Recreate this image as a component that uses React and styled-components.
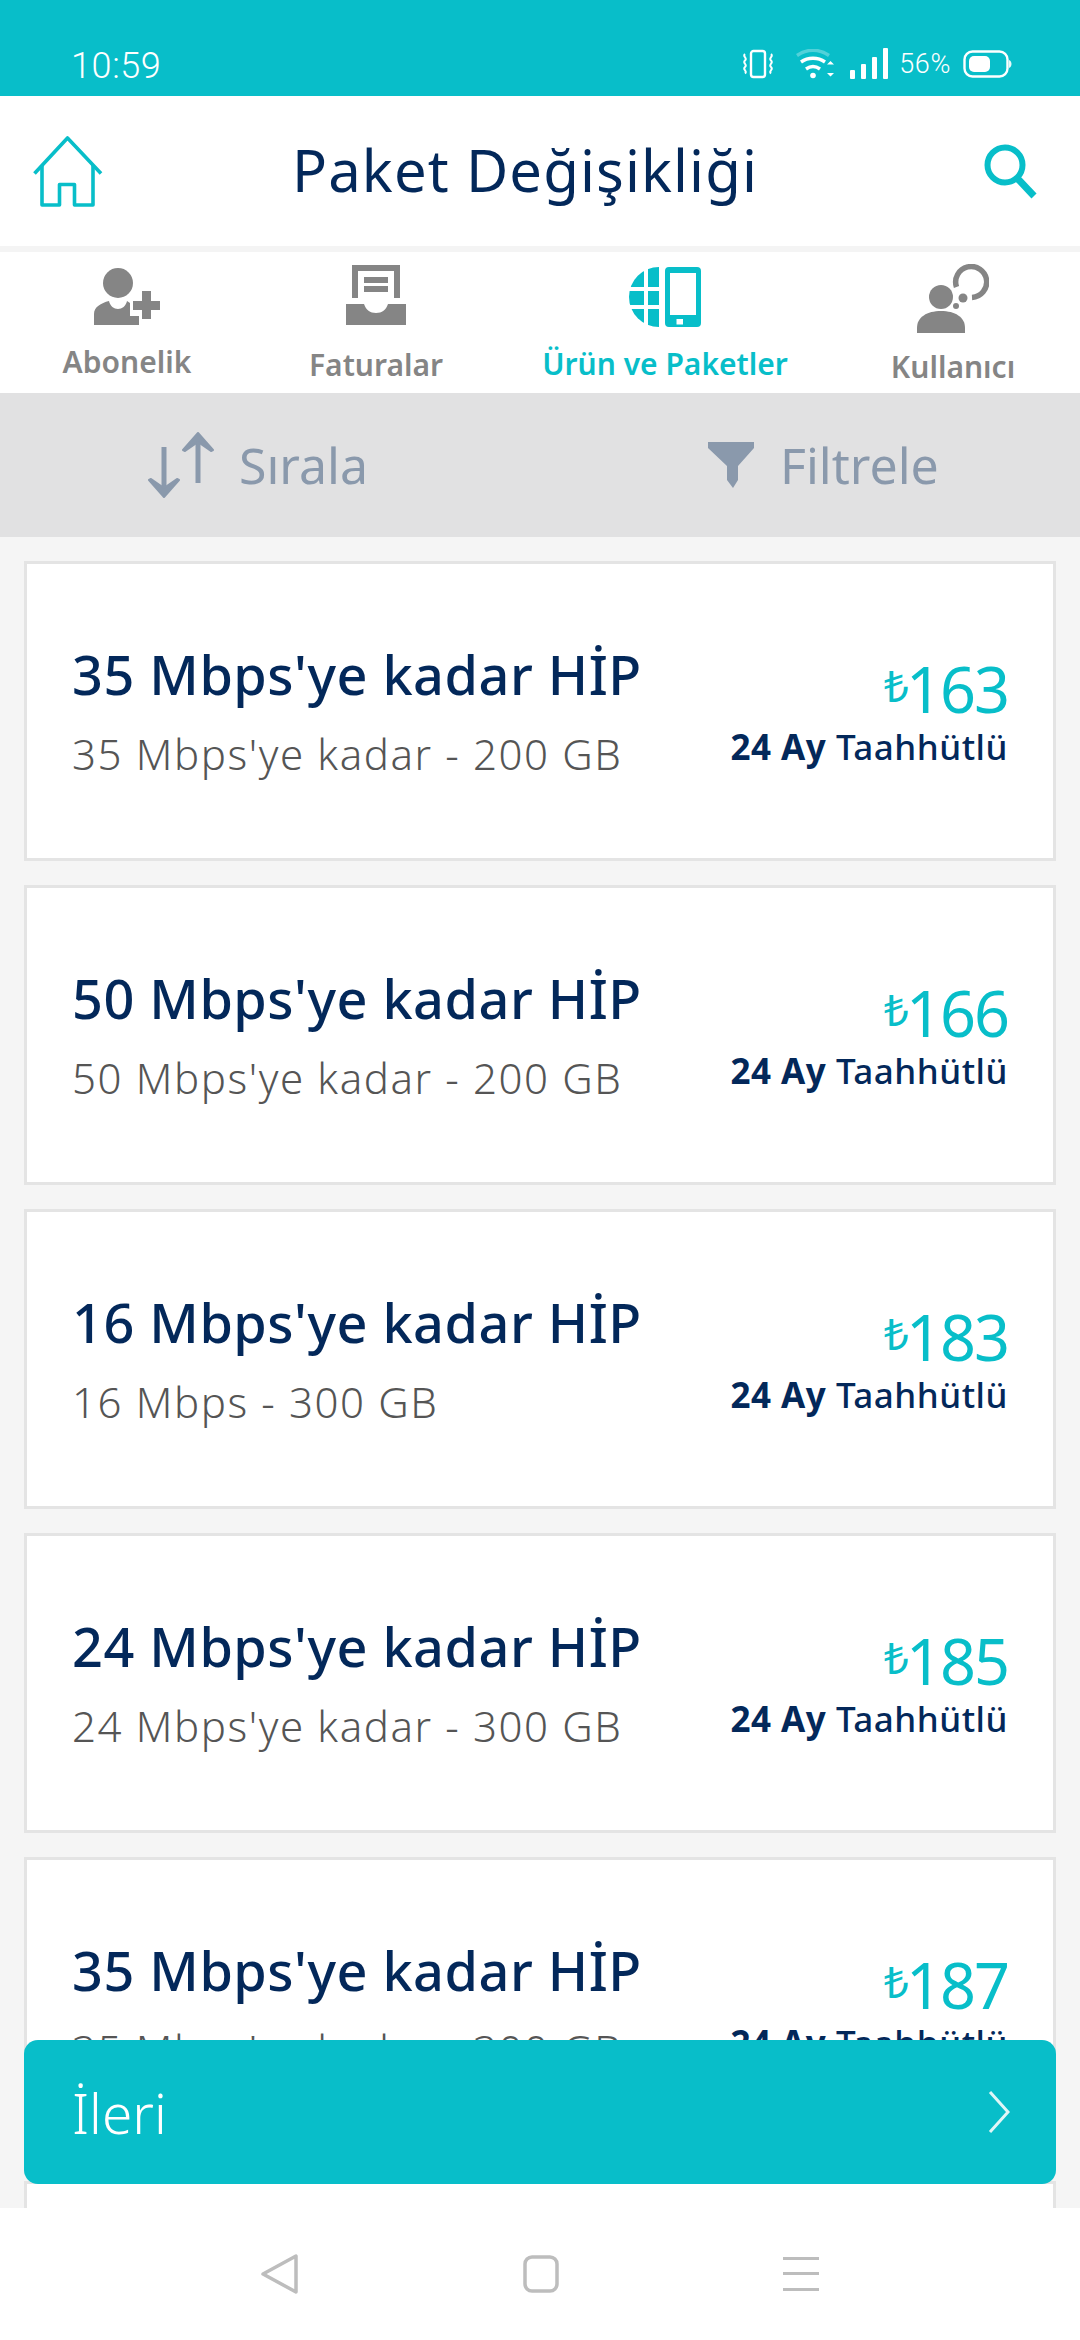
import React from "react";
import styled, { createGlobalStyle } from "styled-components";

const Global = createGlobalStyle`
  html, body { margin: 0; padding: 0; background: #f5f5f5; }
  * { box-sizing: border-box; }
  #root { width: 1080px; height: 2340px; }
`;
const FONT = `"Noto Sans", "Open Sans", "Liberation Sans", sans-serif`;
const TEAL = "#08bec9";
const NAVY = "#03285a";

const Page = styled.div`
  width: 1080px; height: 2340px; display: flex; flex-direction: column;
  position: relative; overflow: hidden; background: #f5f5f5; font-family: ${FONT};
`;
const StatusBar = styled.div`
  height: 96px; flex: none; background: ${TEAL}; display: flex; align-items: flex-end;
  justify-content: space-between; padding: 0 68px 12px 71px; color: #fff;
`;
const Time = styled.span`
  font-family: Roboto, sans-serif; font-weight: 300; font-size: 36px; line-height: 36px; letter-spacing: 0.6px;
`;
const StatusIcons = styled.div`display: flex; align-items: center; height: 36px; margin-bottom: 2px;`;
const Percent = styled.span`
  font-family: Roboto, sans-serif; font-size: 27px; font-weight: 300; line-height: 32px; margin: 0 12px 0 11px; letter-spacing: 0.6px;
`;
const Header = styled.header`
  height: 150px; flex: none; background: #fff; display: flex; align-items: center;
  justify-content: space-between; padding: 0 42px 0 33px;
`;
const Title = styled.h1`
  margin: 0 37px 3px 0; font-size: 58px; font-weight: 400; color: ${NAVY}; letter-spacing: 1.1px; line-height: 70px;
`;
const Divider = styled.div`height: 6px; flex: none; background: #f4f4f4;`;
const Tabs = styled.nav`
  height: 141px; flex: none; background: #fff; display: grid;
  grid-template-columns: 254px 244px 334px 242px;
`;
const Tab = styled.div`
  display: flex; flex-direction: column; align-items: center; padding-top: ${p => p.$top}px;
`;
const TabLabel = styled.span`
  margin-top: ${p => p.$gap}px; font-size: 30px; line-height: 36px; font-weight: 600; white-space: nowrap;
  color: ${p => (p.$active ? TEAL : "#858585")};
`;
const Toolbar = styled.div`
  height: 144px; flex: none; background: #e1e1e2; display: flex;
`;
const ToolGroup = styled.div`
  display: flex; align-items: center; width: 540px; padding-left: ${p => p.$left}px; color: #8a99ac;
`;
const ToolLabel = styled.span`
  font-size: 50px; line-height: 60px; margin-left: ${p => p.$gap}px;
`;
const List = styled.div`
  flex: 1; min-height: 0; overflow: hidden; padding: 24px 24px 0;
  display: flex; flex-direction: column; gap: 24px;
`;
const Card = styled.article`
  flex: none; height: 300px; background: #fff; border: 3px solid #e4e4e4;
  display: flex; justify-content: space-between; align-items: flex-start; padding: 0 45px;
`;
const CardMain = styled.div`padding-top: 75px; display: flex; flex-direction: column;`;
const CardTitle = styled.div`
  font-size: 54px; font-weight: 500; color: ${NAVY}; line-height: 70px; white-space: nowrap; letter-spacing: 0.5px;
`;
const CardSub = styled.div`
  font-size: 42px; font-weight: 300; color: #555; line-height: 56px; margin-top: 17px; white-space: nowrap; letter-spacing: 1.6px;
`;
const CardSide = styled.div`
  padding-top: 87px; display: flex; flex-direction: column; align-items: flex-end;
`;
const Price = styled.div`
  font-size: 63px; color: ${TEAL}; line-height: 76px; white-space: nowrap; letter-spacing: -2px;
`;
const Lira = styled.span`font-size: 44px; position: relative; top: -11px; margin-right: -1px;`;
const Commit = styled.div`
  font-size: 35px; color: ${NAVY}; line-height: 44px; font-weight: 500; white-space: nowrap; margin-top: -9px; letter-spacing: 0.5px;
  b { font-weight: 700; }
`;
const NextButton = styled.button`
  position: absolute; left: 24px; right: 24px; top: 2040px; height: 144px; border: 0; border-radius: 14px;
  background: ${TEAL}; color: #fff; display: flex; align-items: center; justify-content: space-between;
  padding: 0 46px 0 48px; font-family: ${FONT}; font-size: 55px; font-weight: 300;
`;
const NavBar = styled.div`
  height: 132px; flex: none; background: #fff; display: flex; align-items: center; justify-content: center; gap: 224px;
`;
const StatusGap = styled.span`width: ${p => p.$w}px;`;

const Gray = "#858585";
const Slate = "#8a99ac";

const Vibrate = () => (
  <svg width="32" height="30" viewBox="0 0 32 30" fill="none" stroke="#fff" strokeWidth="2.4">
    <rect x="9" y="2" width="14" height="26" rx="2.5" />
    <path d="M3 5c-3 2.500 3 4 0 6.500s3 4 0 6.500 3 4 0 6.500M29 5c3 2.500-3 4 0 6.500s-3 4 0 6.500-3 4 0 6.500" strokeWidth="2" />
  </svg>
);
const Wifi = () => (
  <svg width="40" height="30" viewBox="0 0 40 30" fill="none" stroke="#fff" strokeWidth="3.4">
    <path d="M1 6.500c10-7 22-7 32 0" opacity="0.3" />
    <path d="M5 13c7-5 17-5 24 0" />
    <path d="M10 20c4.500-3.200 9.500-3.200 14 0" />
    <circle cx="17" cy="26.500" r="2.800" fill="#fff" stroke="none" />
    <path d="M31 15.500l3.500-3.500 3.500 3.500zM31 24l3.500 3.500 3.500-3.500z" fill="#fff" stroke="none" />
  </svg>
);
const Signal = () => (
  <svg width="38" height="32" viewBox="0 0 38 32" fill="#fff">
    <rect x="0" y="22" width="5" height="9" rx="1" />
    <rect x="11" y="16" width="5" height="15" rx="1" />
    <rect x="22" y="9" width="5" height="22" rx="1" />
    <rect x="33" y="0" width="5" height="31" rx="1" />
  </svg>
);
const Battery = () => (
  <svg width="49" height="30" viewBox="0 0 49 30">
    <rect x="1.500" y="2.500" width="43" height="25" rx="8" fill="none" stroke="#fff" strokeWidth="2.400" />
    <rect x="6" y="7" width="21" height="16" rx="5" fill="#fff" />
    <path d="M46 11c2 1 2.500 2.500 2.500 4s-.5 3-2.500 4z" fill="#fff" opacity="0.9" />
  </svg>
);
const HomeIcon = () => (
  <svg width="70" height="72" viewBox="0 0 70 72" fill="none" stroke={TEAL} strokeWidth="3.600" strokeLinejoin="round">
    <path d="M1.500 38.500L34.500 3l33.500 35.500" />
    <path d="M9 30v40h17.500V49.500h15V70H60V30" />
  </svg>
);
const SearchIcon = () => (
  <svg width="54" height="55" viewBox="0 0 54 55" fill="none" stroke={TEAL}>
    <circle cx="21" cy="21" r="17.500" strokeWidth="6" />
    <path d="M33 34l17 18" strokeWidth="7" />
  </svg>
);
const AboneIcon = () => (
  <svg width="66" height="57" viewBox="0 0 66 57" fill={Gray}>
    <circle cx="24" cy="15" r="15" />
    <path d="M0 57V46C0 39 7 35 15 33C16 38 20 41 24 41C28 41 32 38 33 33L36 35V48H45V57Z" />
    <path d="M48 23h9v10h9v9h-9v9h-9v-9h-9v-9h9z" />
  </svg>
);
const FaturaIcon = () => (
  <svg width="60" height="60" viewBox="0 0 60 60" fill={Gray}>
    <path d="M6 0h48v33h-6V6H12v27H6z" />
    <rect x="18" y="12" width="24" height="6" />
    <rect x="18" y="21" width="24" height="6" />
    <path d="M0 39h18c2 6 6 9 12 9s10-3 12-9h18v21H0z" />
  </svg>
);
const UrunIcon = () => (
  <svg width="72" height="60" viewBox="0 0 72 60" fill={TEAL}>
    <clipPath id="globeCells">
      <rect x="0" y="0" width="15" height="20" />
      <rect x="19" y="0" width="11" height="20" />
      <rect x="0" y="24" width="15" height="14" />
      <rect x="19" y="24" width="11" height="14" />
      <rect x="0" y="42" width="15" height="18" />
      <rect x="19" y="42" width="11" height="18" />
    </clipPath>
    <circle cx="30" cy="30" r="30" clipPath="url(#globeCells)" />
    <path fillRule="evenodd" d="M40 0h28a4 4 0 0 1 4 4v52a4 4 0 0 1-4 4H40a4 4 0 0 1-4-4V4a4 4 0 0 1 4-4zm1 6v42h26V6zm6.500 46v5.500h6.500V52z" />
  </svg>
);
const UserIcon = () => (
  <svg width="72" height="69" viewBox="0 0 72 69" fill={Gray}>
    <circle cx="24" cy="33" r="12" />
    <path d="M0 69v-5c0-11 10-17 24-17s24 6 24 17v5z" />
    <path d="M55 33.500A15.500 15.500 0 1 0 39.500 23" fill="none" stroke={Gray} strokeWidth="5.500" />
    <circle cx="46" cy="34" r="4.500" />
    <circle cx="39" cy="42" r="3" />
  </svg>
);
const SortIcon = () => (
  <svg width="66" height="67" viewBox="0 0 66 67" fill="none" stroke={Slate} strokeLinejoin="round">
    <path d="M16 15v48" strokeWidth="5" />
    <path d="M1 48l15 17 15-17-2-1-13 9-13-9z" strokeWidth="2" fill={Slate} />
    <path d="M50 6v45" strokeWidth="5" />
    <path d="M35 18L50 1l15 17-2 1-13-9-13 9z" strokeWidth="2" fill={Slate} />
  </svg>
);
const FunnelIcon = () => (
  <svg width="46" height="46" viewBox="0 0 46 46" fill={Slate}>
    <path d="M0 0h46v6L30 24v14l-5 8-6-8V24L0 6z" />
  </svg>
);
const ChevronIcon = () => (
  <svg width="22" height="42" viewBox="0 0 22 42" fill="none" stroke="#dff6f7" strokeWidth="3">
    <path d="M2 1l18 20L2 41" />
  </svg>
);
const BackIcon = () => (
  <svg width="38" height="42" viewBox="0 0 38 42" fill="none" stroke="#bdbdbd" strokeWidth="3.500" strokeLinejoin="round">
    <path d="M35 3v36L2 21z" />
  </svg>
);
const HomeSquare = () => (
  <svg width="36" height="38" viewBox="0 0 36 38" fill="none" stroke="#bdbdbd" strokeWidth="3.500">
    <rect x="2" y="2" width="32" height="34" rx="7" />
  </svg>
);
const MenuIcon = () => (
  <svg width="36" height="34" viewBox="0 0 36 34" fill="#bdbdbd">
    <rect y="0" width="36" height="3" />
    <rect y="15" width="36" height="3" />
    <rect y="31" width="36" height="3" />
  </svg>
);

const plans = [
  ["35 Mbps'ye kadar HİP", "35 Mbps'ye kadar - 200 GB", "163"],
  ["50 Mbps'ye kadar HİP", "50 Mbps'ye kadar - 200 GB", "166"],
  ["16 Mbps'ye kadar HİP", "16 Mbps - 300 GB", "183"],
  ["24 Mbps'ye kadar HİP", "24 Mbps'ye kadar - 300 GB", "185"],
  ["35 Mbps'ye kadar HİP", "35 Mbps'ye kadar - 300 GB", "187"],
  ["", "", ""],
];

export default function App() {
  return (
    <Page>
      <Global />
      <StatusBar>
        <Time>10:59</Time>
        <StatusIcons>
          <Vibrate />
          <StatusGap $w={22} />
          <Wifi />
          <StatusGap $w={14} />
          <Signal />
          <Percent>56%</Percent>
          <Battery />
        </StatusIcons>
      </StatusBar>
      <Header>
        <HomeIcon />
        <Title>Paket Değişikliği</Title>
        <SearchIcon />
      </Header>
      <Divider />
      <Tabs>
        <Tab $top={16}><AboneIcon /><TabLabel $gap={19}>Abonelik</TabLabel></Tab>
        <Tab $top={13}><FaturaIcon /><TabLabel $gap={22}>Faturalar</TabLabel></Tab>
        <Tab $top={15}><UrunIcon /><TabLabel $gap={19} $active>Ürün ve Paketler</TabLabel></Tab>
        <Tab $top={12}><UserIcon /><TabLabel $gap={16}>Kullanıcı</TabLabel></Tab>
      </Tabs>
      <Toolbar>
        <ToolGroup $left={148}><SortIcon /><ToolLabel $gap={25}>Sırala</ToolLabel></ToolGroup>
        <ToolGroup $left={168}><FunnelIcon /><ToolLabel $gap={26}>Filtrele</ToolLabel></ToolGroup>
      </Toolbar>
      <List>
        {plans.map((p, i) => (
          <Card key={i}>
            <CardMain>
              <CardTitle>{p[0]}</CardTitle>
              <CardSub>{p[1]}</CardSub>
            </CardMain>
            {p[2] && (
              <CardSide>
                <Price><Lira>₺</Lira>{p[2]}</Price>
                <Commit><b>24 Ay</b> Taahhütlü</Commit>
              </CardSide>
            )}
          </Card>
        ))}
      </List>
      <NextButton>İleri<ChevronIcon /></NextButton>
      <NavBar>
        <BackIcon />
        <HomeSquare />
        <MenuIcon />
      </NavBar>
    </Page>
  );
}
